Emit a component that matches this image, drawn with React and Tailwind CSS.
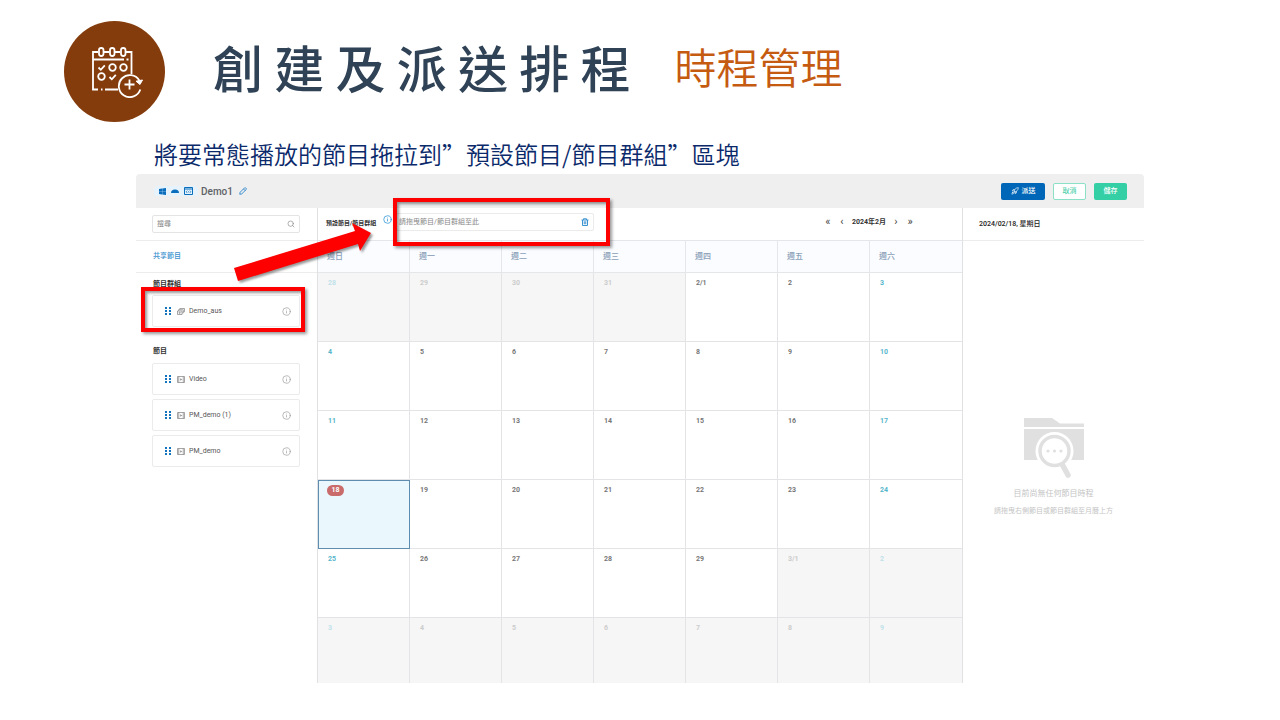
import clsx from 'clsx'
import { Info, Rocket, Search } from 'lucide-react'

const WEEKDAYS = ['週日', '週一', '週二', '週三', '週四', '週五', '週六']

const WEEKS = [
  ['28', '29', '30', '31', '2/1', '2', '3'],
  ['4', '5', '6', '7', '8', '9', '10'],
  ['11', '12', '13', '14', '15', '16', '17'],
  ['18', '19', '20', '21', '22', '23', '24'],
  ['25', '26', '27', '28', '29', '3/1', '2'],
  ['3', '4', '5', '6', '7', '8', '9'],
]

const PROGRAMS = ['Video', 'PM_demo (1)', 'PM_demo']

export default function App() {
  return (
    <div className="min-h-screen overflow-hidden bg-white font-['Roboto','Noto_Sans_CJK_TC',sans-serif]" lang="zh-Hant">
      <SlideHeader />
      <p className="mt-4 mb-1 pl-[154px] font-['Noto_Sans_CJK_TC',sans-serif] text-2xl leading-8 font-[350] text-[#0b2a6b]">
        將要常態播放的節目拖拉到”預設節目/節目群組”區塊
      </p>
      <main className="mx-[136px] rounded-sm">
        <TopBar />
        <div className="flex">
          <Sidebar />
          <Calendar />
          <DayPanel />
        </div>
      </main>
    </div>
  )
}

function SlideHeader() {
  return (
    <header className="flex items-start pt-[21px] pl-16">
      <div className="flex size-[101px] shrink-0 items-center justify-center rounded-full bg-[#843c0c] pl-1">
        <ScheduleLogo />
      </div>
      <div className="flex h-[90px] items-center">
        <h1 className="ml-12 font-['Noto_Sans_CJK_TC',sans-serif] text-[50px] leading-none font-medium whitespace-nowrap text-[#2f4256]">
          創 建 及 派 送 排 程
        </h1>
        <h2 className="ml-11 font-['Noto_Sans_CJK_TC',sans-serif] text-[42px] leading-none font-[350] whitespace-nowrap text-[#c55a11]">
          時程管理
        </h2>
      </div>
    </header>
  )
}

function ScheduleLogo() {
  return (
    <svg width="52" height="52" viewBox="0 0 52 52" fill="none" stroke="#fff" strokeWidth="1.8">
      <path d="M7 6H2v37.500h5M10 43.500h1.500M14 43.500h13M12.500 6h6M24 6h5M35 6h5.500v22" />
      <path d="M2 13.500h31M35.500 13.500h2" />
      <rect x="8" y="2" width="4.500" height="8" rx="2.200" />
      <rect x="19" y="2" width="4.500" height="8" rx="2.200" />
      <rect x="30" y="2" width="4.500" height="8" rx="2.200" />
      <path d="M7.500 21.500l2.300 2.300 4-4.500M18.500 31l2.300 2.300 4-4.500" />
      <circle cx="21.500" cy="21.500" r="3.300" />
      <circle cx="32.500" cy="21.500" r="3.300" />
      <circle cx="10.500" cy="30.500" r="3.300" />
      <path d="M49.300 43.500A11 11 0 1 1 48.300 34.500" />
      <path d="M51.500 34l-2.500 4.500-4-3.300z" fill="#fff" strokeWidth="1" />
      <path d="M33.500 38.500h10M38.500 33.500v10" />
    </svg>
  )
}

function TopBar() {
  return (
    <div className="flex h-[34px] items-center rounded-t-sm bg-[#efefef] pr-[17px] pl-[18px]">
      <div className="flex h-[10px] w-11 items-center justify-center gap-[5px] rounded-sm bg-[#e6f3fc] text-[#0a6ebd]">
        <svg width="7" height="7" viewBox="0 0 14 14" fill="currentColor">
          <path d="M0 2l6-1v6H0zM6.500 1L14 0v7H6.500zM0 7.500h6V13l-6-1zM6.500 7.500H14V14l-7.500-1z" />
        </svg>
        <svg width="8" height="6" viewBox="0 0 16 12" fill="currentColor">
          <path d="M0 10a8 7 0 0 1 16 0z" />
        </svg>
        <svg width="9" height="8" viewBox="0 0 18 16" fill="none" stroke="currentColor" strokeWidth="2">
          <path d="M1 1h16v14H1zM1 4h16" />
          <path d="M6.500 7l-2 2.500 2 2.500M11.500 7l2 2.500-2 2.500M8 9.500h2" strokeWidth="1.500" />
        </svg>
      </div>
      <span className="ml-[3px] text-[10px] font-medium text-[#606266]">Demo1</span>
      <button type="button" aria-label="編輯" className="ml-[6px] text-[#2a86cc]">
        <svg width="8" height="8" viewBox="0 0 16 16" fill="none" stroke="currentColor" strokeWidth="1.800">
          <path d="M1.500 14.500l.8-4L11 1.800q1.200-1 2.300 0l1 1q1 1.200 0 2.300L5.500 13.800zM9 4l3.200 3.200" />
        </svg>
      </button>
      <div className="ml-auto flex gap-2 text-[7px] font-medium">
        <button type="button" className="flex h-[17px] w-11 items-center justify-center gap-[3px] rounded-xs bg-[#0067b8] text-white">
          <Rocket size={8} />
          派送
        </button>
        <button type="button" className="h-[17px] w-[33px] rounded-xs border border-[#8be0c8] bg-white text-[#4fd0ac]">
          取消
        </button>
        <button type="button" className="h-[17px] w-[33px] rounded-xs bg-[#34cfa5] text-white">
          儲存
        </button>
      </div>
    </div>
  )
}

function Sidebar() {
  return (
    <aside className="w-[181px] shrink-0 text-[7px]">
      <div className="flex h-[33px] items-center border-b border-[#ececec] pr-[17px] pl-4">
        <label className="flex h-[18px] w-full items-center rounded-xs border border-[#e4e4e4] px-1">
          <input
            type="search"
            aria-label="搜尋"
            placeholder="搜尋"
            className="min-w-0 flex-1 outline-none placeholder:text-[#888]"
          />
          <Search size={8} className="text-[#888]" />
        </label>
      </div>
      <div className="flex h-8 items-center border-b border-[#ececec] pl-[17px]">
        <a href="#shared" className="font-medium text-[#3b92cf]">共享節目</a>
      </div>
      <section className="pt-1 pr-[17px] pl-4">
        <h3 className="h-[14px] pl-px leading-[14px] font-bold text-[#333]">節目群組</h3>
        <div className="relative mt-1">
          <ProgramCard name="Demo_aus" group />
          <div className="absolute -top-2 right-[-5px] -bottom-[5px] -left-[11px] border-4 border-[#fe0000] shadow-[2px_2px_3px_rgba(0,0,0,0.4),inset_2px_2px_3px_rgba(0,0,0,0.4)]" />
        </div>
      </section>
      <section className="pt-[17px] pr-[17px] pl-4">
        <h3 className="h-[14px] pl-px leading-[14px] font-bold text-[#333]">節目</h3>
        <div className="mt-[5px] flex flex-col gap-1">
          {PROGRAMS.map((name) => (
            <ProgramCard key={name} name={name} />
          ))}
        </div>
      </section>
    </aside>
  )
}

function ProgramCard({ name, group }) {
  return (
    <div className="flex h-8 items-center rounded-xs border border-[#ebebeb] pr-2 pl-3 text-[#555]">
      <svg width="6" height="8" viewBox="0 0 6 8" fill="#1473bd">
        <path d="M0 0h2v2H0zM4 0h2v2H4zM0 3h2v2H0zM4 3h2v2H4zM0 6h2v2H0zM4 6h2v2H4z" />
      </svg>
      {group ? (
        <svg className="ml-[6px]" width="8" height="7" viewBox="0 0 16 14" fill="none" stroke="#888" strokeWidth="1.500">
          <path d="M1 6h9v7H1zM3 6V3.500h9.500V10H10M5.500 3.500V1H15v6.500h-2.500M4.500 8v3l2.500-1.500z" />
        </svg>
      ) : (
        <svg className="ml-[6px]" width="8" height="7" viewBox="0 0 16 14" fill="none" stroke="#888" strokeWidth="1.500">
          <path d="M1 1h14v12H1zM3.500 1v12M12.500 1v12" />
          <path d="M6.500 4.500v5L10.500 7z" fill="#888" stroke="none" />
        </svg>
      )}
      <span className="ml-1">{name}</span>
      <Info size={9} strokeWidth={1.8} className="ml-auto text-[#999]" />
    </div>
  )
}

function Calendar() {
  return (
    <section className="min-w-0 flex-1 border-x border-[#dfe1e4]">
      <div className="relative flex h-8 items-center pr-12 pb-1 pl-2 text-[7px]">
        <label htmlFor="default-program" className="w-14 text-[6px] font-bold whitespace-nowrap text-[#333]">
          預設節目/節目群組
        </label>
        <Info size={9} className="mb-[6px] ml-px text-[#2a93d5]" />
        <div className="ml-1 flex h-[18px] w-[198px] items-center rounded-xs border border-[#ebebeb] pr-1 pl-[2px]">
          <input
            id="default-program"
            readOnly
            placeholder="請拖曳節目/節目群組至此"
            className="min-w-0 flex-1 outline-none placeholder:text-[#888]"
          />
          <button type="button" aria-label="刪除" className="text-[#3c93d0]">
            <svg width="8" height="8" viewBox="0 0 16 16" fill="none" stroke="currentColor" strokeWidth="2">
              <path d="M1 4h14M5 4V1.500h6V4M3 4v11h10V4M6.500 6.500v6M9.500 6.500v6" />
            </svg>
          </button>
        </div>
        <nav className="ml-auto flex items-center gap-2 text-[#444]">
          <button type="button" aria-label="上一年" className="w-2 text-[11px] leading-3">«</button>
          <button type="button" aria-label="上一月" className="w-1 text-[11px] leading-3">‹</button>
          <span className="font-bold whitespace-nowrap text-[#333]">2024年2月</span>
          <button type="button" aria-label="下一月" className="w-1 text-[11px] leading-3">›</button>
          <button type="button" aria-label="下一年" className="w-2 text-[11px] leading-3">»</button>
        </nav>
        <div className="absolute -top-[10px] left-[75px] h-12 w-[217px] border-4 border-[#fe0000] shadow-[2px_2px_3px_rgba(0,0,0,0.4),inset_2px_2px_3px_rgba(0,0,0,0.4)]" />
        <DragArrow />
      </div>
      <table className="w-full table-fixed border-separate border-spacing-0">
        <thead>
          <tr>
            {WEEKDAYS.map((day) => (
              <th
                key={day}
                className="h-[33px] border-y border-r border-[#e4e6e9] bg-[#fafcff] pl-[9px] text-left text-[8px] font-medium text-[#8ba0b8] last:border-r-0"
              >
                {day}
              </th>
            ))}
          </tr>
        </thead>
        <tbody>
          {WEEKS.map((week, row) => (
            <tr key={row}>
              {week.map((date, col) => (
                <DateCell key={col} date={date} row={row} col={col} />
              ))}
            </tr>
          ))}
        </tbody>
      </table>
    </section>
  )
}

function DateCell({ date, row, col }) {
  // February runs from Thursday of the first row to Thursday of the fifth.
  const index = row * 7 + col
  const outside = index < 4 || index > 32
  const selected = index === 21
  const weekend = col === 0 || col === 6
  return (
    <td
      className={clsx(
        'align-top text-[7px] leading-[11px] font-bold',
        row === 5 ? 'h-[65px]' : 'h-[69px]',
        selected
          ? 'border border-[#5f8db0] bg-[#eaf7fc] pt-1 pl-2'
          : 'border-r border-b border-[#e4e4e7] pt-[5px] pl-[10px] last:border-r-0',
        row === 5 && 'border-b-0',
        outside && 'bg-[#f6f6f6]',
        weekend ? (outside ? 'text-[#bfe2ea]' : 'text-[#56b6cb]') : outside ? 'text-[#ccc]' : 'text-[#777]',
      )}
    >
      {selected ? (
        <span className="block h-[11px] w-[17px] rounded-full bg-[#c96b6b] text-center text-white">{date}</span>
      ) : (
        date
      )}
    </td>
  )
}

// Points from the sidebar card to the default-program drop zone.
function DragArrow() {
  return (
    <svg
      className="pointer-events-none absolute top-3 -left-[87px] drop-shadow-[2px_2px_1px_rgba(0,0,0,0.4)]"
      width="146"
      height="66"
      viewBox="0 0 146 66"
      fill="#fe0000"
    >
      <path d="M3 48L124 11L121 3L140 13L129 31L127 24L7 61z" />
    </svg>
  )
}

function DayPanel() {
  return (
    <aside className="flex w-[181px] shrink-0 flex-col">
      <div className="flex h-[33px] items-center border-b border-[#ececec] pl-4 text-[7px] font-medium text-[#222]">
        2024/02/18, 星期日
      </div>
      <div className="flex flex-1 flex-col items-center justify-center pt-3 text-[#c4c4c4]">
        <svg width="60" height="60" viewBox="0 0 60 60" fill="#e0e0e0">
          <path d="M0 0h28l8 5.500h24V9H0zM0 11h60v31H0z" />
          <circle cx="30.500" cy="33" r="19" fill="#fff" />
          <path d="M37.500 48l6 10" stroke="#fff" strokeWidth="9" />
          <path d="M38 46l6 11" stroke="#e0e0e0" strokeWidth="5.500" strokeLinecap="round" />
          <circle cx="30.500" cy="33" r="14.500" fill="#fff" stroke="#e0e0e0" strokeWidth="3.500" />
          <circle cx="24" cy="33" r="1.600" />
          <circle cx="30.500" cy="33" r="1.600" />
          <circle cx="37" cy="33" r="1.600" />
        </svg>
        <p className="mt-2 text-[8px] leading-4">目前尚無任何節目時程</p>
        <p className="mt-px text-[7px] leading-4">請拖曳右側節目或節目群組至月曆上方</p>
      </div>
    </aside>
  )
}
